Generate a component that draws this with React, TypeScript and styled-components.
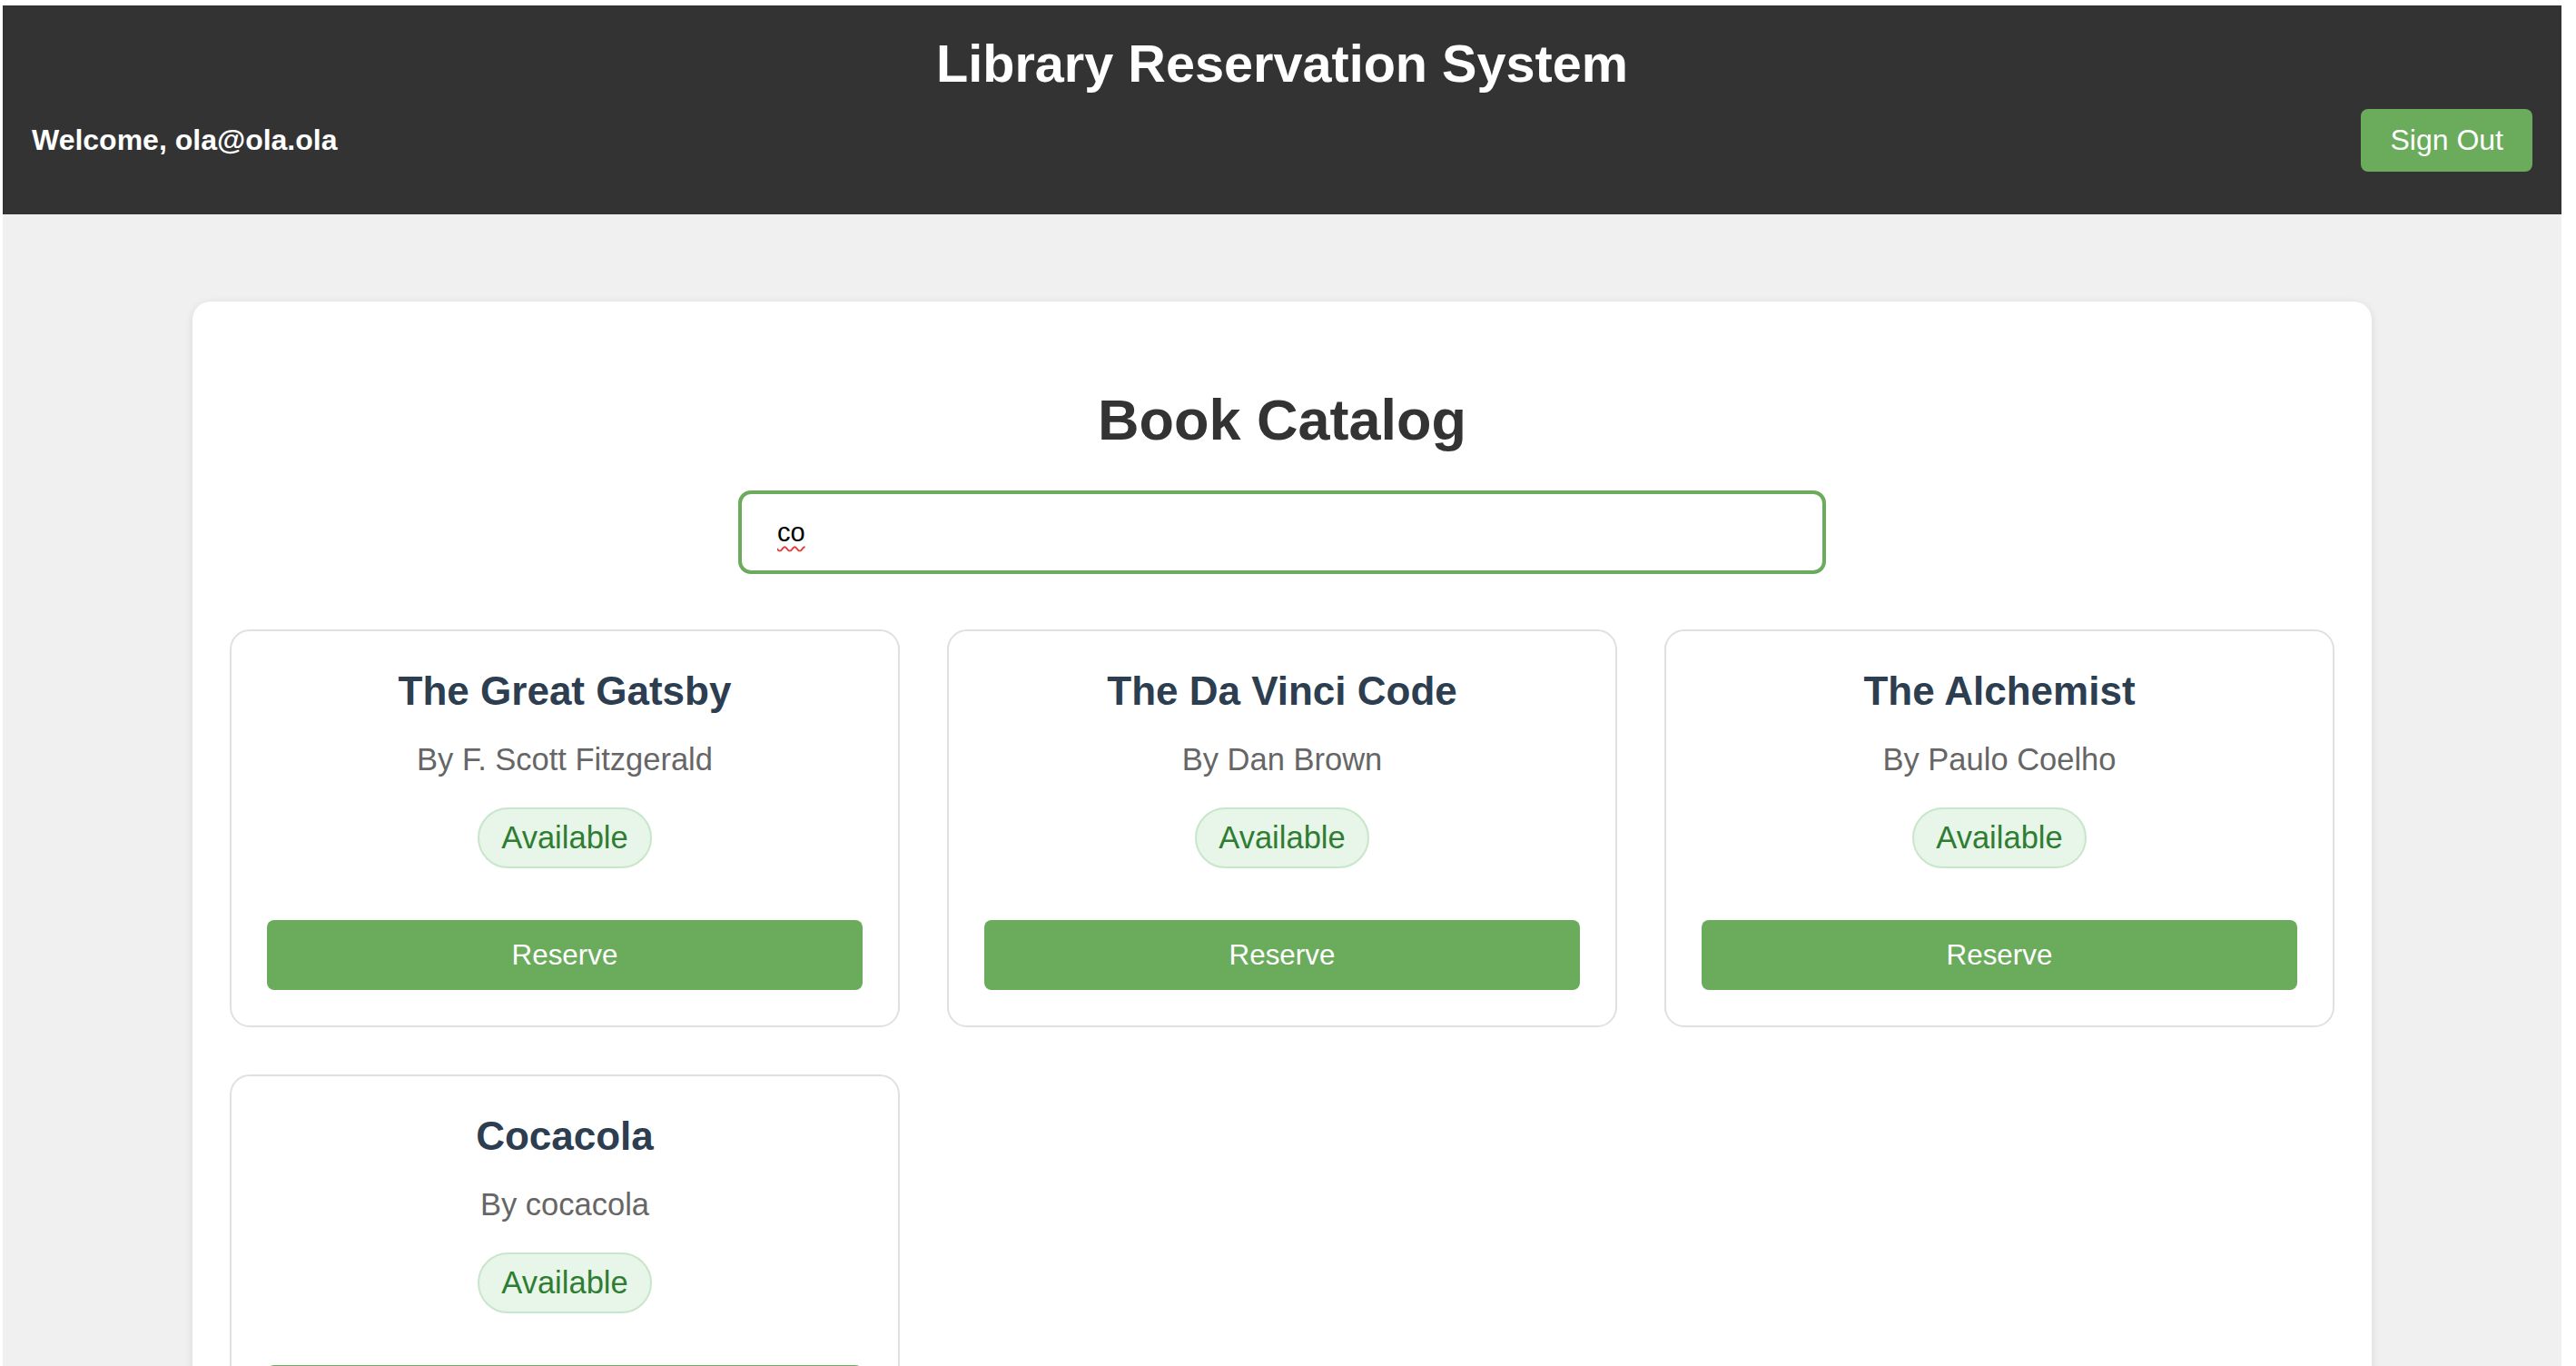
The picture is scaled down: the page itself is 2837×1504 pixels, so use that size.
import React from "react";
import styled, { createGlobalStyle } from "styled-components";

const GlobalStyle = createGlobalStyle`
  html, body {
    margin: 0;
    padding: 0;
    background: #ffffff;
  }
  body {
    padding: 6px 16px 0 3px;
    font-family: "Liberation Sans", Arial, sans-serif;
  }
  * { box-sizing: border-box; }
`;

const Page = styled.div`
  background: #f0f0f0;
  min-height: 1498px;
  font-family: "Liberation Sans", Arial, sans-serif;
`;

const Header = styled.header`
  background: #333333;
  color: #ffffff;
  padding: 31px 32px 47px;
`;

const AppTitle = styled.h1`
  margin: 0;
  text-align: center;
  font-size: 57.6px;
  font-weight: 700;
  line-height: normal;
`;

const UserBar = styled.div`
  margin-top: 17px;
  display: flex;
  align-items: center;
  justify-content: space-between;
`;

const Welcome = styled.span`
  font-size: 32px;
  font-weight: 700;
`;

const GreenButton = styled.button<{ $full?: boolean }>`
  font-family: "Liberation Sans", Arial, sans-serif;
  background: #6aab5c;
  color: #ffffff;
  border: none;
  border-radius: 8px;
  cursor: pointer;
  display: flex;
  align-items: center;
  justify-content: center;
  width: ${(p) => (p.$full ? "100%" : "auto")};
  height: ${(p) => (p.$full ? "77px" : "69px")};
  padding: ${(p) => (p.$full ? "0" : "0 32px")};
  font-size: ${(p) => (p.$full ? "31.4px" : "32px")};
`;

const Main = styled.main`
  padding: 96px 0 0;
`;

const Catalog = styled.section`
  width: 2400px;
  margin: 0 auto;
  background: #ffffff;
  border-radius: 20px;
  box-shadow: 0 2px 10px rgba(0, 0, 0, 0.1);
  padding: 94px 41px 60px;
  display: flex;
  flex-direction: column;
  align-items: center;
`;

const CatalogTitle = styled.h2`
  margin: 0;
  font-size: 63px;
  font-weight: 700;
  color: #333333;
  line-height: normal;
`;

const SearchWrap = styled.div`
  position: relative;
  margin-top: 42px;
  width: 1198px;
`;

const SearchInput = styled.input`
  display: block;
  width: 100%;
  height: 92px;
  border: 4px solid #6aab5c;
  border-radius: 14px;
  padding: 0 39px;
  font-family: "Liberation Sans", Arial, sans-serif;
  font-size: 29px;
  color: #000000;
  outline: none;
  background: #ffffff;
`;

const Squiggle = styled.span`
  position: absolute;
  left: 43px;
  top: 50%;
  transform: translateY(-50%);
  pointer-events: none;
  font-family: "Liberation Sans", Arial, sans-serif;
  font-size: 29px;
  line-height: 1;
  color: transparent;
  text-decoration: underline wavy #e53935;
  text-decoration-thickness: 1.5px;
  text-underline-offset: 5px;
`;

const Grid = styled.div`
  margin-top: 61px;
  width: 100%;
  display: grid;
  grid-template-columns: repeat(3, 1fr);
  gap: 52px;
`;

const Card = styled.article`
  border: 2px solid #e0e0e0;
  border-radius: 22px;
  padding: 41px 39px 39px;
  display: flex;
  flex-direction: column;
  align-items: center;
  background: #ffffff;
`;

const BookTitle = styled.h3`
  margin: 0;
  font-size: 44px;
  font-weight: 700;
  color: #2c3e50;
  line-height: normal;
`;

const Author = styled.p`
  margin: 31px 0 0;
  font-size: 34.5px;
  color: #666666;
  line-height: normal;
`;

const Badge = styled.span`
  margin-top: 33px;
  display: inline-flex;
  align-items: center;
  height: 67px;
  padding: 0 24px;
  border-radius: 34px;
  background: #e8f5e9;
  border: 2px solid #c8e6c9;
  color: #2e7d32;
  font-size: 34.5px;
`;

const Actions = styled.div`
  margin-top: 57px;
  width: 100%;
`;

const books = [
  { title: "The Great Gatsby", author: "F. Scott Fitzgerald" },
  { title: "The Da Vinci Code", author: "Dan Brown" },
  { title: "The Alchemist", author: "Paulo Coelho" },
  { title: "Cocacola", author: "cocacola" },
];

export default function App() {
  return (
    <>
      <GlobalStyle />
      <Page>
        <Header>
          <AppTitle>Library Reservation System</AppTitle>
          <UserBar>
            <Welcome>Welcome, ola@ola.ola</Welcome>
            <GreenButton>Sign Out</GreenButton>
          </UserBar>
        </Header>
        <Main>
          <Catalog>
            <CatalogTitle>Book Catalog</CatalogTitle>
            <SearchWrap>
              <SearchInput defaultValue="co" spellCheck={false} />
              <Squiggle aria-hidden="true">co</Squiggle>
            </SearchWrap>
            <Grid>
              {books.map((b) => (
                <Card key={b.title}>
                  <BookTitle>{b.title}</BookTitle>
                  <Author>By {b.author}</Author>
                  <Badge>Available</Badge>
                  <Actions>
                    <GreenButton $full>Reserve</GreenButton>
                  </Actions>
                </Card>
              ))}
            </Grid>
          </Catalog>
        </Main>
      </Page>
    </>
  );
}
